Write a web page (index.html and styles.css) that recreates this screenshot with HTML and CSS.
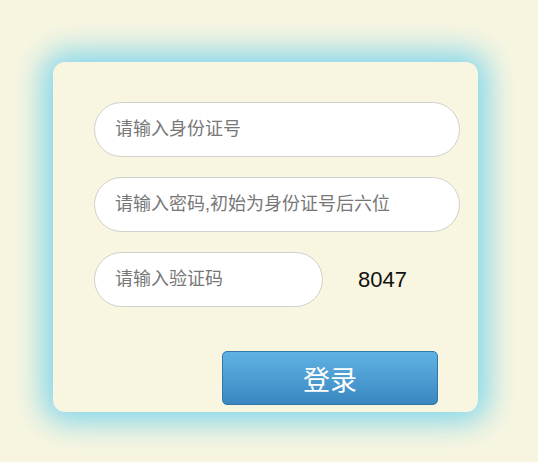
FILE: index.html
```html
<!DOCTYPE html>
<html lang="zh-CN">
<head>
<meta charset="utf-8">
<title>登录</title>
<link rel="stylesheet" href="styles.css">
</head>
<body>
<div class="card">
  <form class="login-form">
    <input class="field field-wide" type="text" placeholder="请输入身份证号">
    <input class="field field-wide" type="password" placeholder="请输入密码,初始为身份证号后六位">
    <div class="captcha-row">
      <input class="field field-short" type="text" placeholder="请输入验证码">
      <span class="captcha">8047</span>
    </div>
    <div class="actions">
      <button class="login-btn" type="button">登录</button>
    </div>
  </form>
</div>
</body>
</html>
```

FILE: styles.css
```css
html, body {
  margin: 0;
  padding: 0;
}
body {
  background: #f7f5e0;
  width: 538px;
  height: 462px;
  overflow: hidden;
  font-family: "Liberation Sans", "Noto Sans CJK SC", sans-serif;
}
.card {
  margin: 62px 0 0 53px;
  width: 425px;
  height: 350px;
  box-sizing: border-box;
  background: #f8f5e1;
  border-radius: 12px;
  box-shadow: 0 0 30px 10px #80d6ec;
  padding: 40px 0 0 41px;
}
.login-form {
  display: flex;
  flex-direction: column;
  gap: 20px;
}
.field {
  box-sizing: border-box;
  height: 55px;
  border: 1px solid #d0d0cc;
  border-radius: 28px;
  background: #fff;
  padding: 0 0 0 20px;
  font-size: 18px;
  font-family: "Liberation Sans", "Noto Sans CJK SC", sans-serif;
  color: #333;
  outline: none;
}
.field::placeholder {
  color: #777;
}
.field-wide {
  width: 366px;
}
.field-short {
  width: 229px;
}
.captcha-row {
  display: flex;
  align-items: center;
  gap: 35px;
}
.captcha {
  font-size: 22px;
  color: #111;
  font-family: "Liberation Sans", sans-serif;
}
.actions {
  margin-top: 24px;
  padding-left: 128px;
}
.login-btn {
  width: 216px;
  height: 54px;
  border: 1px solid #3377a8;
  border-radius: 5px;
  background: linear-gradient(#60b2e3, #3a87c1);
  color: #fff;
  font-size: 27px;
  font-family: "Noto Sans CJK SC", sans-serif;
  padding: 0;
  line-height: 1;
  cursor: pointer;
}
```
